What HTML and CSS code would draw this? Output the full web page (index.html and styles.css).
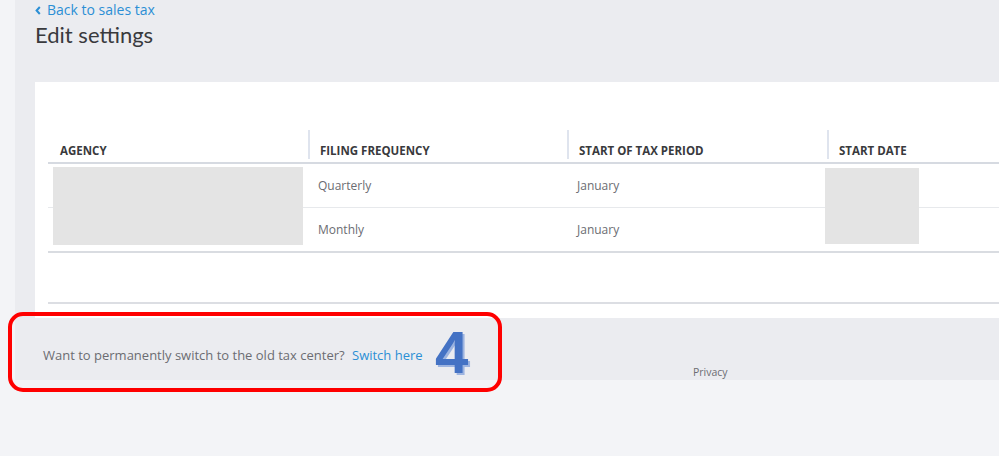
FILE: index.html
```html
<!DOCTYPE html>
<html>
<head>
<meta charset="utf-8">
<link rel="stylesheet" href="styles.css">
</head>
<body>
<div class="app">
  <div class="rail"></div>
  <div class="main">
    <div class="head">
      <a class="back" href="#"><svg class="chev" width="6" height="9" viewBox="0 0 6 9"><path d="M4.8 1 L1.6 4.5 L4.8 8" fill="none" stroke="#2b8fd5" stroke-width="2"/></svg>Back to sales tax</a>
      <h1 class="title">Edit settings</h1>
    </div>
    <div class="card">
      <div class="table">
        <div class="row thead">
          <div class="cell c1">AGENCY</div>
          <div class="cell c2 div">FILING FREQUENCY</div>
          <div class="cell c3 div">START OF TAX PERIOD</div>
          <div class="cell c4 div">START DATE</div>
        </div>
        <div class="row trow">
          <div class="cell c1"></div>
          <div class="cell c2">Quarterly</div>
          <div class="cell c3">January</div>
          <div class="cell c4"></div>
        </div>
        <div class="row trow last">
          <div class="cell c1"></div>
          <div class="cell c2">Monthly</div>
          <div class="cell c3">January</div>
          <div class="cell c4"></div>
        </div>
        <div class="redact r-agency"></div>
        <div class="redact r-date"></div>
      </div>
      <div class="spacer"></div>
    </div>
    <div class="footer">
      <p class="switch">Want to permanently switch to the old tax center? <a href="#" class="link">Switch here</a></p>
      <div class="privacy">Privacy</div>
    </div>
  </div>
</div>
<div class="callout"></div>
<div class="step">4</div>
</body>
</html>
```
FILE: styles.css
```css
html, body {
  margin: 0;
  padding: 0;
}
body {
  width: 999px;
  height: 456px;
  overflow: hidden;
  background: #f3f4f7;
  font-family: "Open Sans", "Lato", sans-serif;
  position: relative;
}
.app {
  display: flex;
  height: 380px;
}
.rail {
  width: 15px;
  background: #f3f4f7;
}
.main {
  flex: 1;
  background: #ebecf0;
  padding-left: 20px;
  display: flex;
  flex-direction: column;
}
.head {
  height: 82px;
  padding-top: 1px;
  box-sizing: border-box;
}
.back {
  display: flex;
  align-items: center;
  gap: 6px;
  color: #2b8fd5;
  text-decoration: none;
  font-size: 14px;
  line-height: 18px;
}
.chev {
  display: block;
  margin-top: 1px;
}
.title {
  margin: 3px 0 0;
  font-family: "Lato", sans-serif;
  font-weight: 400;
  font-size: 22px;
  line-height: 26px;
  color: #393a3d;
}
.card {
  background: #ffffff;
  height: 236px;
  padding: 48px 0 0 13px;
  box-sizing: border-box;
}
.table {
  position: relative;
}
.row {
  display: flex;
  box-sizing: border-box;
}
.cell {
  box-sizing: border-box;
  padding-left: 10px;
}
.c1 { width: 260px; padding-left: 12px; }
.c2 { width: 259px; }
.c3 { width: 260px; }
.c4 { flex: 1; }
.thead {
  height: 34px;
  border-bottom: 2px solid #d6dae1;
  align-items: stretch;
}
.thead .cell {
  font-size: 11.5px;
  font-weight: 700;
  color: #393a3d;
  padding-top: 13px;
}
.thead .div {
  border-left: 2px solid #dfe4ee;
  margin-bottom: 3px;
}
.trow {
  height: 44px;
  align-items: center;
  border-bottom: 1px solid #e7e9ec;
}
.trow .cell {
  font-size: 12px;
  color: #6b6c72;
}
.trow.last {
  height: 45px;
  border-bottom: 2px solid #d9dce1;
}
.redact {
  position: absolute;
  background: #e4e4e4;
}
.r-agency {
  left: 5px;
  top: 37px;
  width: 250px;
  height: 78px;
}
.r-date {
  left: 777px;
  top: 38px;
  width: 94px;
  height: 76px;
}
.spacer {
  height: 49px;
  border-bottom: 2px solid #dcdee3;
}
.footer {
  flex: 1;
  position: relative;
}
.switch {
  margin: 28px 0 0 8px;
  font-size: 13px;
  color: #6b6c72;
}
.link {
  color: #2b8fd5;
  text-decoration: none;
  margin-left: 4px;
}
.privacy {
  position: absolute;
  left: 658px;
  top: 47px;
  font-size: 10.5px;
  color: #6b6c72;
}
.callout {
  position: absolute;
  left: 8px;
  top: 312px;
  width: 494px;
  height: 80px;
  box-sizing: border-box;
  border: 4px solid #ff0000;
  border-radius: 15px;
}
.step {
  position: absolute;
  left: 435px;
  top: 318px;
  font-family: "Liberation Sans", Arial, sans-serif;
  font-weight: 700;
  font-size: 60px;
  line-height: 70px;
  color: #4472c4;
  text-shadow: 2px 2px 0 #9db4e0;
}
```
